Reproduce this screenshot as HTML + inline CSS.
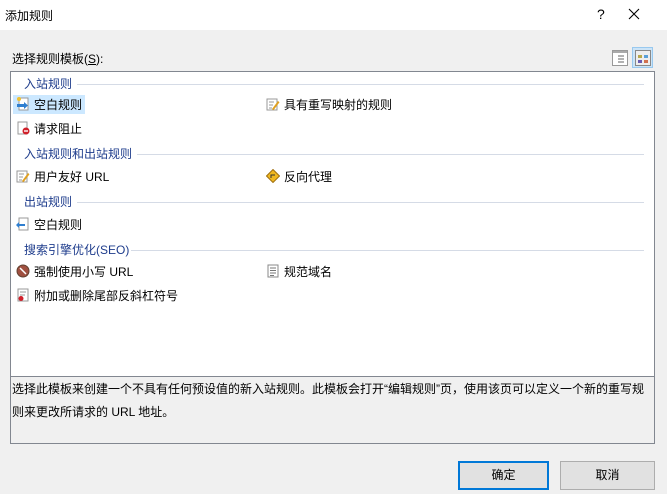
<!DOCTYPE html>
<html><head><meta charset="utf-8"><style>
*{margin:0;padding:0;box-sizing:border-box}
body{width:667px;height:494px;background:#f0f0f0;font-family:"Liberation Sans","Noto Sans CJK SC",sans-serif;font-size:12px;color:#000;position:relative;overflow:hidden}
.a{position:absolute;white-space:nowrap}
.title{left:0;top:0;width:667px;height:30px;background:#fff}
.list{left:10px;top:71px;width:645px;height:306px;background:#fff;border:1px solid #828790}
.hdr{color:#1e3c8c}
.line{position:absolute;height:1px;background:#d5dbe6}
.ic{position:absolute;width:14px;height:14px}
.desc{left:10px;top:376px;width:645px;height:68px;border:1px solid #828790;border-top:1px solid #828790}
.btn{top:461px;height:29px;background:#e1e1e1;border:1px solid #adadad;text-align:center;line-height:27px}
</style></head><body>
<div class="a title"></div>
<div class="a" style="left:5px;top:7px">添加规则</div>
<div class="a" style="left:597px;top:6px;font-size:14px">?</div>
<svg class="a" style="left:628px;top:8px" width="12" height="12"><path d="M1 1L11 11M11 1L1 11" stroke="#000" stroke-width="1.1"/></svg>
<div class="a" style="left:12px;top:50px">选择规则模板(<u>S</u>):</div>
<svg class="a" style="left:612px;top:50px" width="16" height="16"><rect x="0.5" y="0.5" width="15" height="15" fill="#fff" stroke="#999"/><rect x="1" y="1" width="14" height="2" fill="#aaa"/><path d="M6 6h6M6 9h6M6 12h6" stroke="#666"/></svg>
<div class="a" style="left:632px;top:47px;width:21px;height:21px;background:#cce4f7;border:1px solid #99c9ef"></div>
<svg class="a" style="left:635px;top:50px" width="16" height="16"><rect x="0.5" y="0.5" width="15" height="15" fill="#eee" stroke="#888"/><rect x="3" y="5" width="4" height="3" fill="#b9a94c"/><rect x="9" y="5" width="4" height="3" fill="#5aa0d8"/><rect x="3" y="10" width="4" height="3" fill="#6a5ab0"/><rect x="9" y="10" width="4" height="3" fill="#d07050"/></svg>
<div class="a list">
<div class="a" style="left:2px;top:23px;width:72px;height:19px;background:#cce8ff"></div>
</div>
<div class="a hdr" style="left:24px;top:75px">入站规则</div><div class="line" style="left:77px;top:84px;width:567px"></div>
<div class="a hdr" style="left:24px;top:145px">入站规则和出站规则</div><div class="line" style="left:137px;top:154px;width:507px"></div>
<div class="a hdr" style="left:24px;top:193px">出站规则</div><div class="line" style="left:77px;top:202px;width:567px"></div>
<div class="a hdr" style="left:24px;top:241px">搜索引擎优化(SEO)</div><div class="line" style="left:131px;top:250px;width:513px"></div>

<svg class="ic" style="left:16px;top:97px" viewBox="0 0 14 14"><rect x="3" y="1" width="9" height="12" fill="#fff" stroke="#999"/><path d="M1 7h7V5l4 3.5-4 3.5v-2H1z" fill="#2f7fd0"/><circle cx="3" cy="2" r="2" fill="#f0c030"/></svg>
<div class="a" style="left:34px;top:96px">空白规则</div>
<svg class="ic" style="left:16px;top:121px" viewBox="0 0 14 14"><rect x="2" y="1" width="9" height="12" fill="#fff" stroke="#999"/><circle cx="10" cy="10" r="3.5" fill="#d0202a"/><rect x="8" y="9.3" width="4" height="1.4" fill="#fff"/></svg>
<div class="a" style="left:34px;top:120px">请求阻止</div>
<svg class="ic" style="left:266px;top:97px" viewBox="0 0 14 14"><rect x="1" y="2" width="10" height="11" fill="#fff" stroke="#999"/><path d="M3 5h5M3 8h4M3 11h3" stroke="#999"/><path d="M6 12l6-8 1.5 1.2-6 8z" fill="#e0a020"/></svg>
<div class="a" style="left:284px;top:96px">具有重写映射的规则</div>
<svg class="ic" style="left:16px;top:169px" viewBox="0 0 14 14"><rect x="1" y="2" width="10" height="11" fill="#fff" stroke="#999"/><path d="M3 5h5M3 8h4M3 11h3" stroke="#999"/><path d="M6 12l6-8 1.5 1.2-6 8z" fill="#e0a020"/></svg>
<div class="a" style="left:34px;top:168px">用户友好 URL</div>
<svg class="ic" style="left:266px;top:169px" viewBox="0 0 14 14"><path d="M7 0.5L13.5 7 7 13.5 0.5 7z" fill="#f0b820" stroke="#a07010"/><path d="M5 9V6h4" stroke="#333" fill="none"/></svg>
<div class="a" style="left:284px;top:168px">反向代理</div>
<svg class="ic" style="left:16px;top:217px" viewBox="0 0 14 14"><rect x="3" y="1" width="9" height="12" fill="#fff" stroke="#999"/><path d="M9 7H3V5L0 8l3 3V9h6z" fill="#2f7fd0"/></svg>
<div class="a" style="left:34px;top:216px">空白规则</div>
<svg class="ic" style="left:16px;top:264px" viewBox="0 0 14 14"><circle cx="7" cy="7" r="6" fill="#a05040" stroke="#604030"/><path d="M4 4l6 6" stroke="#fff" stroke-width="1.5"/></svg>
<div class="a" style="left:34px;top:263px">强制使用小写 URL</div>
<svg class="ic" style="left:266px;top:264px" viewBox="0 0 14 14"><rect x="2" y="1" width="10" height="12" fill="#fff" stroke="#888"/><path d="M4 4h6M4 6.5h6M4 9h6M4 11.5h4" stroke="#777"/></svg>
<div class="a" style="left:284px;top:263px">规范域名</div>
<svg class="ic" style="left:16px;top:288px" viewBox="0 0 14 14"><rect x="2" y="1" width="10" height="12" fill="#fff" stroke="#999"/><path d="M4 4h6M4 7h5" stroke="#999"/><circle cx="5" cy="10.5" r="2.5" fill="#d0202a"/></svg>
<div class="a" style="left:34px;top:287px">附加或删除尾部反斜杠符号</div>

<div class="a desc"></div>
<div class="a" style="left:12px;top:378px;line-height:23px;white-space:normal;width:640px">选择此模板来创建一个不具有任何预设值的新入站规则。此模板会打开“编辑规则”页，使用该页可以定义一个新的重写规则来更改所请求的 URL 地址。</div>
<div class="a btn" style="left:458px;width:91px;border:2px solid #0078d7;line-height:25px">确定</div>
<div class="a btn" style="left:560px;width:95px">取消</div>
</body></html>
